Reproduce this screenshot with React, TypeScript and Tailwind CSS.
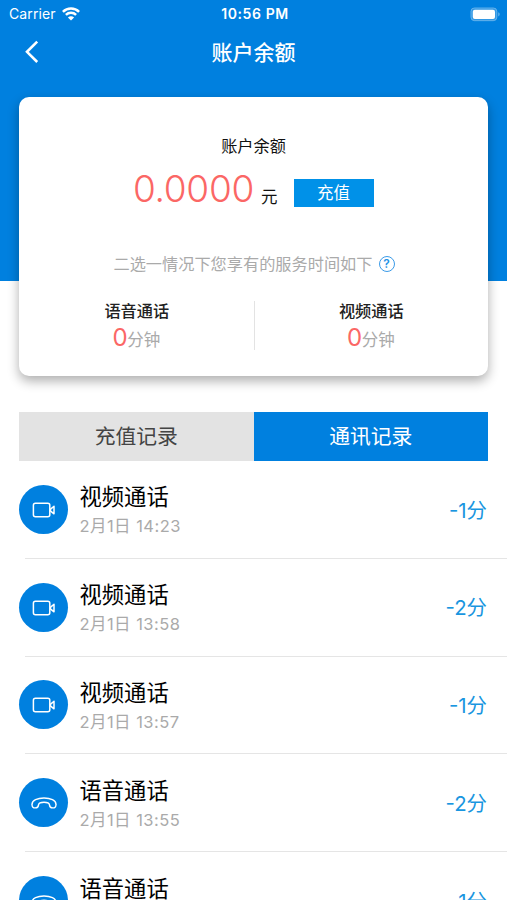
type CallKind = 'video' | 'voice';

const records: { kind: CallKind; date: string; minutes: number }[] = [
  { kind: 'video', date: '2月1日 14:23', minutes: 1 },
  { kind: 'video', date: '2月1日 13:58', minutes: 2 },
  { kind: 'video', date: '2月1日 13:57', minutes: 1 },
  { kind: 'voice', date: '2月1日 13:55', minutes: 2 },
  { kind: 'voice', date: '2月1日 13:54', minutes: 1 },
];

function WifiIcon() {
  return (
    <svg width="18" height="14" viewBox="0 0 18 14" fill="none" stroke="white" strokeWidth="2.5">
      <path d="M0.9 4.9C5.4 0.4 12.6 0.4 17.1 4.9" />
      <path d="M3.9 7.9C6.8 5.1 11.2 5.1 14.1 7.9" />
      <path d="M9 13.6L5.9 10.4C7.6 8.8 10.4 8.8 12.1 10.4Z" fill="white" stroke="none" />
    </svg>
  );
}

function BatteryIcon() {
  return (
    <svg width="31" height="15" viewBox="0 0 31 15" fill="none">
      <rect x="0.9" y="0.9" width="26" height="12.8" rx="3.6" fill="white" fillOpacity="0.2" stroke="white" strokeOpacity="0.3" />
      <rect x="2.8" y="2.7" width="22.2" height="9.2" rx="2" fill="white" />
      <path d="M28.3 5.2C30.1 5.9 30.1 8.7 28.3 9.4Z" fill="white" fillOpacity="0.45" />
    </svg>
  );
}

function VideoIcon() {
  return (
    <svg className="mt-px" width="24" height="16" viewBox="0 0 24 16" fill="none" stroke="white" strokeWidth="1.5" strokeLinejoin="round">
      <rect x="1.4" y="1.3" width="16.4" height="13.4" rx="2" />
      <path d="M18.4 7.4L22 4.2V11.8L18.4 8.8Z" />
    </svg>
  );
}

function PhoneIcon() {
  return (
    <svg className="mt-px" width="26" height="12" viewBox="0 0 26 12" fill="none" stroke="white" strokeWidth="1.4" strokeLinejoin="round">
      <path d="M1 7.4C1 3.3 6.5 1 13 1C19.5 1 25 3.3 25 7.4C25.1 10 23.7 11 21.6 10.9C19.2 10.8 18.6 9.6 18.4 7.6C18.2 6 16.6 5.2 13 5.2C9.4 5.2 7.8 6 7.6 7.6C7.4 9.6 6.8 10.8 4.4 10.9C2.3 11 0.9 10 1 7.4Z" />
    </svg>
  );
}

function Quota({ label }: { label: string }) {
  return (
    <div className="flex flex-1 flex-col items-center">
      <div className="h-[20px] text-[16.2px] leading-[20px] font-medium text-[#222]">{label}</div>
      <div className="mt-[2px] flex h-[30px] items-baseline pr-px leading-[30px]">
        <span className="text-[24px] font-[370] tracking-[-0.4px] text-[#fb6765]">0</span>
        <span className="text-[16.5px] text-[#aaa]">分钟</span>
      </div>
    </div>
  );
}

function RecordRow({ kind, date, minutes }: { kind: CallKind; date: string; minutes: number }) {
  return (
    <li className="flex h-[97.8px] flex-col">
      <div className="flex flex-1 items-center pr-[20px] pl-[19px]">
        <div className="flex size-[49px] shrink-0 items-center justify-center rounded-full bg-[#0080df]">
          {kind === 'video' ? <VideoIcon /> : <PhoneIcon />}
        </div>
        <div className="ml-[11.5px] flex-1 pt-[4px]">
          <div className="text-[22.3px] leading-[30px]">{kind === 'video' ? '视频通话' : '语音通话'}</div>
          <div className="text-[16.5px] leading-[28px] tracking-[0.45px] text-[#aaa]">{date}</div>
        </div>
        <div className="pt-[3px] text-[20.4px] text-[#1996e0]">-{minutes}分</div>
      </div>
      <div className="ml-[25px] h-px bg-[#e5e5e5]" />
    </li>
  );
}

export default function App() {
  return (
    <div className="h-[900px] w-full overflow-hidden bg-white font-['Inter','Noto_Sans_CJK_SC',sans-serif] text-black">
      <header className="h-[281px] bg-[#0080df] text-white">
        <div className="grid h-[28px] grid-cols-3 items-center pr-[6px] pl-[9px]">
          <div className="flex items-center gap-[6px] text-[14px] leading-[20px]">
            <span className="tracking-[0.1px]">Carrier</span>
            <WifiIcon />
          </div>
          <div className="text-center text-[14px] leading-[20px] font-semibold tracking-[0.6px] whitespace-nowrap">10:56 PM</div>
          <div className="flex justify-end"><BatteryIcon /></div>
        </div>
        <div className="grid h-[48px] grid-cols-3 items-center px-[24px]">
          <svg width="16" height="24" viewBox="0 0 16 24" fill="none" stroke="white" strokeWidth="2.6">
            <path d="M13.2 1.6L3 11.8L13.2 22" />
          </svg>
          <h1 className="pt-[2px] text-center text-[21px] leading-[28px] font-medium">账户余额</h1>
        </div>
      </header>

      <section className="mx-[19px] -mt-[184px] h-[279px] rounded-[10px] bg-white pt-[38px] shadow-[0_5px_12px_rgba(0,0,0,0.32)]">
        <h2 className="text-center text-[16.2px] leading-[22px] text-[#111]">账户余额</h2>
        <div className="mt-[10px] flex h-[44px] items-center pl-[114px]">
          <span className="w-[122px] text-[37px] leading-[44px] font-[340] tracking-[-0.3px] whitespace-nowrap text-[#fb6765]">0.0000</span>
          <span className="ml-[6px] pt-[15px] text-[16.5px] leading-[20px] text-[#111]">元</span>
          <button className="mt-[7px] ml-[16px] h-[28px] w-[80px] bg-[#0091e8] text-[16.5px] leading-[28px] text-white">充值</button>
        </div>
        <div className="mt-[41px] flex h-[24px] items-center justify-center gap-[6px] pl-px text-[16.2px] leading-[24px] text-[#aaa]">
          <span>二选一情况下您享有的服务时间如下</span>
          <span className="flex size-[16px] items-center justify-center rounded-full border-[1.3px] border-[#3b9be8] text-[12px] leading-[14px] font-semibold text-[#2492e6]">?</span>
        </div>
        <div className="mt-[25px] flex pl-px">
          <Quota label="语音通话" />
          <div className="h-[49px] w-px bg-[#e3e3e3]" />
          <Quota label="视频通话" />
        </div>
      </section>

      <nav className="mx-[19px] mt-[36px] grid h-[49px] grid-cols-2 text-[20.8px] leading-[48px]">
        <button className="bg-[#e3e3e3] pt-px text-[#444]">充值记录</button>
        <button className="bg-[#0080df] pt-px text-white">通讯记录</button>
      </nav>

      <ul>
        {records.map((r) => (
          <RecordRow key={r.date} {...r} />
        ))}
      </ul>
    </div>
  );
}
